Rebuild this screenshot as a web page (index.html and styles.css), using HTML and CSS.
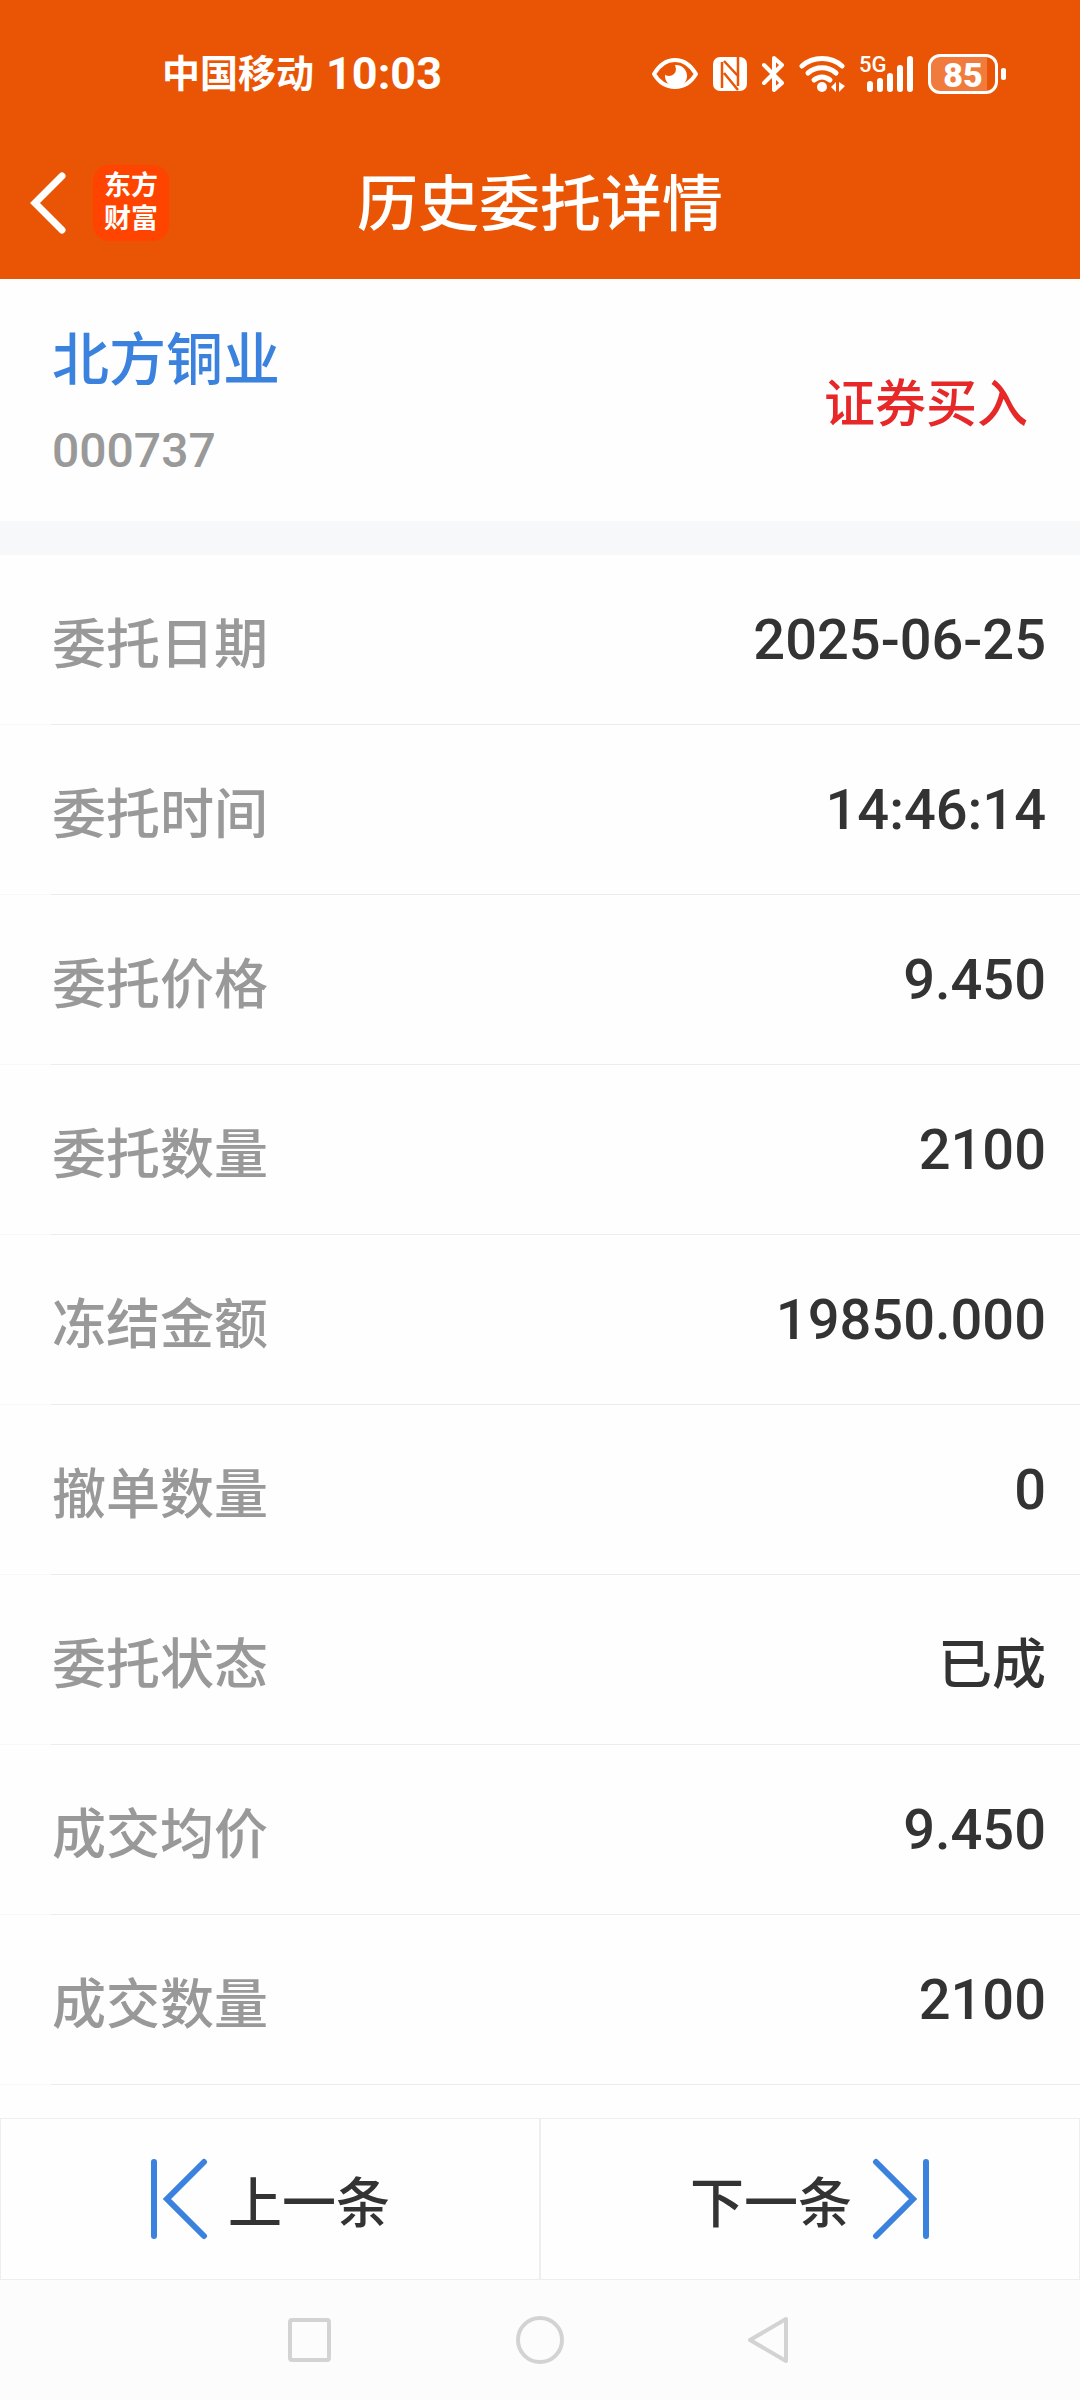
FILE: index.html
```
<!DOCTYPE html>
<html lang="zh-CN">
<head>
    <meta charset="UTF-8">
    <meta name="viewport" content="width=device-width, initial-scale=1.0">
    <title>历史委托详情</title>
    <link rel="stylesheet" href="styles.css">
</head>
<body>
    <header class="header">
        <div class="status-bar">
            <div class="carrier">
                <span class="carrier-name">中国移动</span>
                <span class="clock">10:03</span>
            </div>
            <div class="status-icons">
                <svg width="48" height="40" viewBox="0 0 48 40">
                    <circle cx="25" cy="22" r="11" fill="#fff"/>
                    <circle cx="18" cy="15" r="7" fill="#e95504"/>
                    <path d="M3 20C9 10 16 6 24 6s15 4 21 14c-6 10-13 13-21 13S9 30 3 20z" fill="none" stroke="#fff" stroke-width="4" stroke-linejoin="round"/>
                </svg>
                <svg width="34" height="40" viewBox="0 0 34 40">
                    <rect x="0" y="3" width="34" height="34" rx="7" fill="#fff"/>
                    <path d="M9 34V8M11 7l14 15M11 19l14 17M25 3v29" fill="none" stroke="#e95504" stroke-width="2.500"/>
                </svg>
                <svg width="24" height="40" viewBox="0 0 24 40">
                    <path d="M3 11l18 18-8 7V4l8 7L3 29" fill="none" stroke="#fff" stroke-width="4" stroke-linecap="round" stroke-linejoin="round"/>
                </svg>
                <svg width="46" height="40" viewBox="1 0 46 40">
                    <g fill="none" stroke="#fff" stroke-width="5" stroke-linecap="round">
                        <path d="M4 12c11-10 29-10 40 0"/>
                        <path d="M10 19c8-7 20-7 28 0"/>
                        <path d="M16 26c5-4 11-4 16 0"/>
                    </g>
                    <circle cx="24" cy="33" r="5" fill="#fff"/>
                    <path d="M38 28v10l-5-5zM41 28v10l6-6z" fill="#fff"/>
                </svg>
                <div class="signal">
                    <span class="signal-type">5G</span>
                    <svg width="55" height="40" viewBox="0 0 55 40">
                        <path d="M11 30v5M21 27v8M31 22v13M41 14v21M51 5v30" fill="none" stroke="#fff" stroke-width="6" stroke-linecap="round"/>
                    </svg>
                </div>
                <div class="battery"><span class="battery-level">85</span></div>
            </div>
        </div>
        <nav class="title-bar">
            <div class="title-left">
                <button class="back" type="button" aria-label="返回">
                    <svg width="36" height="62" viewBox="0 0 36 62">
                        <path d="M32 4L5 31l27 27" fill="none" stroke="#fff" stroke-width="7" stroke-linecap="round"/>
                    </svg>
                </button>
                <div class="logo"><span>东方</span><span>财富</span></div>
            </div>
            <h1 class="title">历史委托详情</h1>
        </nav>
    </header>

    <main class="content">
        <section class="summary">
            <div>
                <h2 class="stock-name">北方铜业</h2>
                <div class="stock-code">000737</div>
            </div>
            <div class="trade-type">证券买入</div>
        </section>

        <dl class="details">
            <div class="row"><dt>委托日期</dt><dd>2025-06-25</dd></div>
            <div class="row"><dt>委托时间</dt><dd>14:46:14</dd></div>
            <div class="row"><dt>委托价格</dt><dd>9.450</dd></div>
            <div class="row"><dt>委托数量</dt><dd>2100</dd></div>
            <div class="row"><dt>冻结金额</dt><dd>19850.000</dd></div>
            <div class="row"><dt>撤单数量</dt><dd>0</dd></div>
            <div class="row"><dt>委托状态</dt><dd class="status">已成</dd></div>
            <div class="row"><dt>成交均价</dt><dd>9.450</dd></div>
            <div class="row"><dt>成交数量</dt><dd>2100</dd></div>
        </dl>
    </main>

    <footer class="footer">
        <div class="pager">
            <button class="pager-button" type="button">
                <svg width="58" height="82" viewBox="0 0 58 82">
                    <path d="M4 4v74M54 4L17 41l37 37" fill="none" stroke="#3a82dd" stroke-width="6" stroke-linecap="round"/>
                </svg>
                上一条
            </button>
            <button class="pager-button" type="button">
                下一条
                <svg width="58" height="82" viewBox="0 0 58 82">
                    <path d="M54 4v74M4 4l37 37L4 78" fill="none" stroke="#3a82dd" stroke-width="6" stroke-linecap="round"/>
                </svg>
            </button>
        </div>
        <div class="system-nav">
            <button type="button" aria-label="最近任务">
                <svg width="48" height="48" viewBox="0 0 48 48"><rect x="4" y="4" width="39" height="40" rx="2"/></svg>
            </button>
            <button type="button" aria-label="主页">
                <svg width="48" height="48" viewBox="0 0 48 48"><circle cx="24" cy="24" r="22"/></svg>
            </button>
            <button type="button" aria-label="返回上级">
                <svg width="48" height="48" viewBox="0 0 48 48"><path d="M40 3L4 24l36 21z"/></svg>
            </button>
        </div>
    </footer>
</body>
</html>
```
FILE: styles.css
```
* {
    box-sizing: border-box;
}
body {
    display: flex;
    flex-direction: column;
    min-height: 100vh;
    margin: 0;
    background-color: #fefefe;
    color: #333;
    font-family: Roboto, "Noto Sans CJK SC", sans-serif;
    font-weight: 500;
}
h1, h2, dl, dd {
    margin: 0;
    font-weight: 500;
}
button {
    padding: 0;
    border: none;
    background: none;
    color: inherit;
    font: inherit;
    cursor: pointer;
}
svg {
    display: block;
}

/* Header */
.header {
    background-color: #e95504;
    color: white;
}
.status-bar {
    display: flex;
    justify-content: space-between;
    align-items: center;
    height: 127px;
    padding: 20px 74px 0 162px;
}
.carrier {
    display: flex;
    align-items: center;
    gap: 12px;
    line-height: 48px;
}
.carrier-name {
    font-size: 38px;
    font-weight: 700;
}
.clock {
    font-size: 45px;
    font-weight: 700;
}
.status-icons {
    display: flex;
    align-items: center;
    gap: 14px;
}
.signal {
    position: relative;
}
.signal-type {
    position: absolute;
    top: 0;
    left: 0;
    font-size: 22px;
    line-height: 22px;
}
.battery {
    position: relative;
    width: 70px;
    height: 40px;
    margin-right: 8px;
    border: 3px solid white;
    border-radius: 12px;
    background: linear-gradient(to right, #f07b3c 88%, #e95504 88%);
    font-size: 34px;
    font-weight: 900;
    line-height: 36px;
    text-align: center;
}
.battery::after {
    content: "";
    position: absolute;
    top: 11px;
    right: -11px;
    width: 5px;
    height: 12px;
    border-radius: 2px;
    background-color: white;
}
.title-bar {
    display: grid;
    grid-template-columns: 1fr auto 1fr;
    align-items: center;
    height: 152px;
    padding: 0 30px;
}
.title-left {
    display: flex;
    align-items: center;
    gap: 27px;
}
.logo {
    display: flex;
    flex-direction: column;
    align-items: center;
    justify-content: center;
    width: 76px;
    height: 76px;
    border-radius: 16px;
    background-color: #ff4400;
    font-size: 27px;
    font-weight: 700;
    line-height: 33px;
}
.title {
    padding-top: 4px;
    font-size: 61px;
    line-height: 80px;
}

/* Stock summary */
.summary {
    display: flex;
    justify-content: space-between;
    align-items: center;
    height: 242px;
    padding: 0 52px;
}
.stock-name {
    padding-top: 12px;
    color: #3a82dd;
    font-size: 57px;
    line-height: 90px;
}
.stock-code {
    color: #999;
    font-size: 48px;
    line-height: 90px;
}
.trade-type {
    color: #e62828;
    font-size: 51px;
}

/* Order details */
.details {
    border-top: 34px solid #f6f8fa;
}
.row {
    display: flex;
    justify-content: space-between;
    align-items: center;
    height: 170px;
    padding: 0 34px 0 52px;
    /* divider is fainter under the left padding */
    background: linear-gradient(to right, #f8f8f8 51px, #ececec 51px) bottom / 100% 1px no-repeat;
    font-size: 54px;
}
.row dt {
    color: #999;
}
.row dd {
    font-size: 56px;
}
.row .status {
    font-size: 54px;
}

/* Footer */
.footer {
    margin-top: auto;
}
.pager {
    display: grid;
    grid-template-columns: 1fr 1fr;
}
.pager-button {
    display: flex;
    justify-content: center;
    align-items: center;
    gap: 20px;
    height: 162px;
    border: 1px solid #eee;
    font-size: 54px;
}
.system-nav {
    display: flex;
    justify-content: center;
    align-items: center;
    gap: 182px;
    height: 120px;
    background-color: #fcfcfc;
}
.system-nav svg {
    fill: none;
    stroke: #d3d3d3;
    stroke-width: 4;
    stroke-linejoin: round;
}
```
